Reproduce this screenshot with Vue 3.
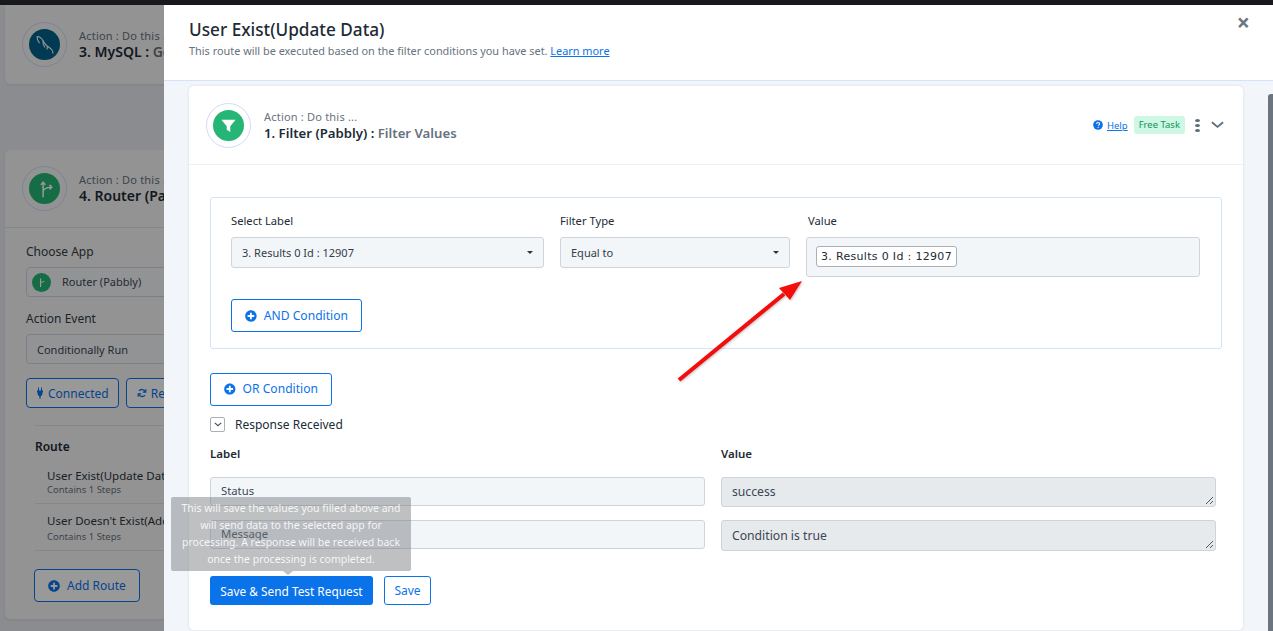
<script setup>
const routes = [
  { name: "User Exist(Update Data)", steps: "Contains 1 Steps" },
  { name: "User Doesn't Exist(Add Data)", steps: "Contains 1 Steps" },
];

const responses = [
  { label: "Status", value: "success", cls: "short" },
  { label: "Message", value: "Condition is true", cls: "tall" },
];

const plus =
  "M256 8C119 8 8 119 8 256s111 248 248 248 248-111 248-248S393 8 256 8zm144 276c0 6.6-5.4 12-12 12h-92v92c0 6.6-5.4 12-12 12h-56c-6.6 0-12-5.4-12-12v-92h-92c-6.6 0-12-5.4-12-12v-56c0-6.6 5.4-12 12-12h92v-92c0-6.6 5.4-12 12-12h56c6.6 0 12 5.4 12 12v92h92c6.6 0 12 5.4 12 12v56z";
</script>

<template>
  <div class="page">
    <div class="topbar"></div>

    <div class="stage">
      <!-- builder behind the drawer -->
      <div class="builder">
        <section class="step first">
          <div class="step-head">
            <span class="ring">
              <span class="disc mysql">
                <svg viewBox="0 0 24 24" width="24" height="24" fill="none" stroke="#fff" stroke-width="1.100">
                  <path d="M4 3.500c2.500 0 4.500 1.500 6 4 1 2 2 3.500 3.500 5 1.500 1.200 4 2.500 6 5" />
                  <path d="M4 3.500c0 3 1 5 2.500 6.500M10 7.500c-.5 3 .5 5 2 7M14.500 13l-.5 3.500M19.500 17.500l.5 3" />
                </svg>
              </span>
            </span>
            <div class="step-text">
              <div class="kicker">Action : Do this ...</div>
              <div class="step-title">3. MySQL : <span>Get Data</span></div>
            </div>
          </div>
        </section>

        <section class="step second">
          <div class="step-head bordered">
            <span class="ring">
              <span class="disc green">
                <svg viewBox="0 0 24 24" width="18" height="18" fill="none" stroke="#fff" stroke-width="2">
                  <path d="M9.500 23V4M9.500 16c0-4 4-6 11-6.500" />
                  <path d="M6.500 6.500l3-3.500 3 3.500M18 6.500l3 3-3 3" />
                </svg>
              </span>
            </span>
            <div class="step-text">
              <div class="kicker">Action : Do this ...</div>
              <div class="step-title">4. Router (Pabbly) : <span>Conditionally Run</span></div>
            </div>
          </div>

          <div class="step-body">
            <div class="bg-label">Choose App</div>
            <div class="bg-select app">
              <span class="mini">
                <svg viewBox="0 0 24 24" width="11" height="11" fill="none" stroke="#fff" stroke-width="2.500">
                  <path d="M10 22V3M10 12c2 0 5-1 8-3" />
                </svg>
              </span>
              Router (Pabbly)
            </div>
            <div class="bg-label">Action Event</div>
            <div class="bg-select">Conditionally Run</div>
            <div class="bg-actions">
              <span class="bg-btn connected">
                <svg viewBox="0 0 24 24" width="8" height="12" fill="currentColor" preserveAspectRatio="none">
                  <path d="M6 1h3v6h6V1h3v6h3v3h-1c0 5-3 8-6 8.500V23h-4v-4.500C7 18 4 15 4 10H3V7h3z" />
                </svg>
                Connected
              </span>
              <span class="bg-btn">
                <svg viewBox="0 0 24 24" width="10" height="10" fill="none" stroke="currentColor" stroke-width="3">
                  <path d="M20 10A8.500 8.500 0 0 0 5 7M4 14a8.500 8.500 0 0 0 15 3" />
                  <path d="M21 3v7h-7M3 21v-7h7" />
                </svg>
                Re-authorize
              </span>
            </div>
            <div class="route-block">
              <div class="route-title">Route</div>
              <div v-for="route in routes" :key="route.name" class="route">
                <div class="route-name">{{ route.name }}</div>
                <div class="route-steps">{{ route.steps }}</div>
              </div>
              <span class="bg-btn add">
                <svg viewBox="0 0 512 512" width="12" height="12" fill="currentColor"><path :d="plus" /></svg>
                Add Route
              </span>
            </div>
          </div>
        </section>
      </div>

      <div class="overlay"></div>

      <!-- drawer -->
      <aside class="drawer">
        <header class="drawer-head">
          <div>
            <h1>User Exist(Update Data)</h1>
            <p>This route will be executed based on the filter conditions you have set. <a href="#">Learn more</a></p>
          </div>
          <span class="close">×</span>
        </header>

        <div class="drawer-body">
          <div class="card">
            <div class="card-head">
              <span class="ring">
                <span class="disc filter">
                  <svg viewBox="0 0 24 24" width="17" height="17" fill="#fff">
                    <path d="M2 4h20l-7.500 9v8l-5-3v-5z" />
                  </svg>
                </span>
              </span>
              <div class="step-text">
                <div class="kicker">Action : Do this ...</div>
                <div class="step-title">1. Filter (Pabbly) : <span>Filter Values</span></div>
              </div>
              <div class="card-tools">
                <svg class="help-icon" viewBox="0 0 512 512" width="10" height="10">
                  <circle cx="256" cy="256" r="248" fill="#0b73ea" />
                  <path d="M180 200c5-50 40-75 80-75 45 0 78 28 78 68 0 55-62 55-62 100" fill="none" stroke="#fff" stroke-width="56" />
                  <circle cx="262" cy="375" r="34" fill="#fff" />
                </svg>
                <a href="#" class="help">Help</a>
                <span class="badge">Free Task</span>
                <span class="dots"><i></i><i></i><i></i></span>
                <svg viewBox="0 0 14 8" width="13" height="8" fill="none" stroke="#5f6d7a" stroke-width="2">
                  <path d="M1 1l6 5 6-5" />
                </svg>
              </div>
            </div>

            <div class="card-body">
              <div class="filter-box">
                <div class="filter-row">
                  <div class="field label-field">
                    <label>Select Label</label>
                    <div class="select">3. Results 0 Id : 12907<b class="caret"></b></div>
                  </div>
                  <div class="field type-field">
                    <label>Filter Type</label>
                    <div class="select">Equal to<b class="caret"></b></div>
                  </div>
                  <div class="field value-field">
                    <label>Value</label>
                    <div class="value-box"><span class="chip">3. Results 0 Id : 12907</span></div>
                  </div>
                </div>
                <button class="btn-outline and">
                  <svg viewBox="0 0 512 512" width="12" height="12" fill="currentColor"><path :d="plus" /></svg>
                  AND Condition
                </button>
              </div>

              <button class="btn-outline or">
                <svg viewBox="0 0 512 512" width="12" height="12" fill="currentColor"><path :d="plus" /></svg>
                OR Condition
              </button>

              <div class="toggle-row">
                <span class="toggle">
                  <svg viewBox="0 0 10 6" width="8" height="5" fill="none" stroke="#44525f" stroke-width="1.500"><path d="M1 1l4 3.500L9 1" /></svg>
                </span>
                Response Received
              </div>

              <div class="resp-grid heads">
                <strong>Label</strong>
                <strong>Value</strong>
              </div>
              <div v-for="row in responses" :key="row.label" class="resp-grid row">
                <div class="resp-label">{{ row.label }}</div>
                <div class="resp-value" :class="row.cls">
                  {{ row.value }}
                  <svg class="grip" viewBox="0 0 9 9" width="9" height="9" stroke="#555" stroke-width="1">
                    <path d="M1 8l7-7M5 8l3-3" />
                  </svg>
                </div>
              </div>

              <div class="submit-row">
                <button class="btn-primary">Save &amp; Send Test Request</button>
                <button class="btn-outline save">Save</button>
              </div>
            </div>
          </div>
        </div>

        <div class="scroll-thumb"></div>

        <!-- annotation arrow -->
        <svg class="arrow" width="140" height="110" viewBox="0 0 140 110">
          <path d="M8 105L113 19" stroke="#f30d0d" stroke-width="4" fill="none" />
          <path d="M131 6L108 13 119 25z" fill="#f30d0d" />
        </svg>

        <div class="tooltip">
          This will save the values you filled above and will send data to the selected app for processing. A response will be received back once the processing is completed.
        </div>
      </aside>
    </div>
  </div>
</template>

<style>
html,
body {
  margin: 0;
  overflow: hidden;
}
</style>

<style scoped>
.page {
  width: 1273px;
  height: 631px;
  overflow: hidden;
  display: flex;
  flex-direction: column;
  font-family: "Noto Sans", "Open Sans", sans-serif;
  color: #212b36;
}
.topbar {
  height: 5px;
  flex: none;
  background: #18181f;
}
.stage {
  position: relative;
  flex: 1;
  overflow: hidden;
  background: #e8eaee;
}

.builder {
  width: 420px;
  padding-left: 5px;
  box-sizing: border-box;
}
.step {
  width: 415px;
  background: #f5f5f5;
  border-radius: 0 0 5px 5px;
  box-shadow: 0 1px 3px rgba(0, 0, 0, 0.08);
}
.first {
  height: 79px;
  margin-bottom: 66px;
}
.second {
  height: 469px;
  border-radius: 5px;
}
.step-head {
  display: flex;
  align-items: center;
  gap: 12px;
  padding: 17px;
  white-space: nowrap;
}
.step-head .ring {
  background: transparent;
}
.step-head .step-title {
  font-size: 14px;
}
.step-head .kicker {
  margin-bottom: 4px;
}
.step-head .step-text {
  margin-top: 0;
}
.step-head.bordered {
  height: 78px;
  box-sizing: border-box;
  border-bottom: 1px solid #dbe3f0;
}
.ring {
  flex: none;
  width: 43px;
  height: 43px;
  border: 1px solid #cfdcf8;
  border-radius: 50%;
  background: #fff;
  display: flex;
  align-items: center;
  justify-content: center;
}
.disc {
  width: 31px;
  height: 31px;
  border-radius: 50%;
  display: flex;
  align-items: center;
  justify-content: center;
}
.mysql {
  background: #00618a;
}
.green {
  background: #25b574;
}
.filter {
  background: #25b574;
}
.step-text {
  line-height: 1;
  margin-top: 2px;
}
.kicker {
  font-size: 11px;
  letter-spacing: 0.2px;
  color: #67727e;
  margin-bottom: 5px;
}
.step-title {
  font-size: 13.200px;
  font-weight: 600;
  color: #212b36;
}
.step-title span {
  color: #67727e;
}
.step-body {
  padding: 16px 0 0 21px;
}
.bg-label {
  font-size: 12px;
  color: #333c46;
  margin-bottom: 7px;
  line-height: 16px;
}
.bg-select {
  width: 380px;
  height: 30px;
  box-sizing: border-box;
  border: 1px solid #cfd4da;
  border-radius: 4px;
  background: #f3f6f9;
  padding: 0 10px;
  font-size: 11px;
  line-height: 30px;
  margin-bottom: 14px;
  color: #3c4652;
}
.bg-select.app {
  display: flex;
  align-items: center;
  gap: 11px;
  padding: 0 5px;
}
.mini {
  width: 19px;
  height: 19px;
  border-radius: 50%;
  background: #25b574;
  display: flex;
  align-items: center;
  justify-content: center;
}
.bg-actions {
  display: flex;
  gap: 7px;
  margin-top: 1px;
}
.bg-btn {
  box-sizing: border-box;
  height: 30px;
  display: inline-flex;
  align-items: center;
  gap: 4px;
  padding: 0 10px;
  border: 1px solid #0b73ea;
  border-radius: 4px;
  background: #fff;
  color: #0b73ea;
  font-size: 12px;
  white-space: nowrap;
}
.connected {
  padding: 0 9px;
}
.route-block {
  margin: 17px 0 0 9px;
  padding-top: 13px;
  border-top: 1px solid #dbe3f0;
  width: 360px;
}
.route-title {
  font-size: 12px;
  font-weight: 600;
  color: #212b36;
  line-height: 16px;
}
.route {
  padding: 15px 0 9px 12px;
  border-bottom: 1px solid #dbe3f0;
  line-height: 1;
}
.route + .route {
  padding-top: 11px;
}
.route-name {
  font-size: 11.500px;
  color: #2b3540;
  margin-bottom: 3px;
}
.route + .route .route-name {
  margin-bottom: 5px;
}
.route-steps {
  font-size: 9.500px;
  color: #67727e;
}
.bg-btn.add {
  height: 33px;
  margin: 18px 0 0 -1px;
  padding: 0 13px;
  gap: 7px;
}

.overlay {
  position: absolute;
  inset: 0;
  background: rgba(0, 0, 0, 0.4);
}

.drawer {
  position: absolute;
  left: 164px;
  top: 0;
  right: 0;
  bottom: 0;
  background: #f2f6fa;
  display: flex;
  flex-direction: column;
}
.drawer-head {
  flex: none;
  height: 76px;
  box-sizing: border-box;
  background: #fff;
  border-bottom: 1px solid #d4e2fb;
  padding: 14px 25px 0;
  display: flex;
  justify-content: space-between;
  align-items: flex-start;
}
h1 {
  margin: 0;
  font-size: 17.200px;
  line-height: 22px;
  font-weight: 500;
  color: #212b36;
}
.drawer-head p {
  margin: 2px 0 0;
  font-size: 10.900px;
  line-height: 16px;
  color: #67727e;
}
a {
  color: #0b73ea;
}
.close {
  font-size: 23px;
  line-height: 18px;
  font-weight: 700;
  color: #6c7680;
  margin: -6px -2px 0 0;
}
.drawer-body {
  flex: 1;
  min-height: 0;
  padding: 5px 30px 0 25px;
}
.card {
  height: 544px;
  background: #fff;
  border-radius: 5px;
  box-shadow: 0 0 3px rgba(40, 60, 90, 0.12);
}
.card-head {
  height: 79px;
  box-sizing: border-box;
  border-bottom: 1px solid #edf2fa;
  display: flex;
  align-items: center;
  gap: 13px;
  padding: 0 17px;
}
.card-tools {
  margin-left: auto;
  display: flex;
  align-items: center;
  font-size: 9.500px;
  padding-right: 2px;
}
.help {
  margin: 0 6px 0 4px;
}
.badge {
  background: #cef7e4;
  color: #13945c;
  border-radius: 3px;
  padding: 0 5px;
  line-height: 18px;
}
.dots {
  display: flex;
  flex-direction: column;
  gap: 2px;
  margin: 0 11px 0 10px;
}
.dots i {
  width: 5px;
  height: 3px;
  border-radius: 50%;
  background: #5f6d7a;
}

.card-body {
  padding: 32px 21px 0;
}
.filter-box {
  height: 152px;
  box-sizing: border-box;
  border: 1px solid #d4e2fb;
  border-radius: 3px;
  padding: 15px 20px 0;
}
.filter-row {
  display: flex;
  align-items: flex-start;
}
.field label {
  display: block;
  font-size: 11.200px;
  line-height: 16px;
  margin-bottom: 8px;
  color: #212b36;
}
.label-field {
  width: 313px;
  margin-right: 16px;
}
.type-field {
  width: 230px;
  margin-right: 16px;
}
.value-field {
  width: 394px;
}
.value-field label {
  padding-left: 2px;
}
.select {
  position: relative;
  height: 31px;
  box-sizing: border-box;
  border: 1px solid #cfd4da;
  border-radius: 3px;
  background: #f3f6f9;
  padding: 0 10px;
  font-size: 11px;
  line-height: 30px;
  color: #333c46;
}
.caret {
  position: absolute;
  right: 10px;
  top: 13px;
  border: 3px solid transparent;
  border-top: 3px solid #333;
  border-bottom: 0;
}
.value-box {
  height: 40px;
  box-sizing: border-box;
  border: 1px solid #cfd4da;
  border-radius: 3px;
  background: #f3f6f9;
  padding: 8px 9px;
  display: flex;
  align-items: flex-start;
}
.chip {
  height: 21px;
  box-sizing: border-box;
  border: 1px solid #aab0b6;
  border-radius: 3px;
  background: #fff;
  padding: 0 4px;
  font-family: "DejaVu Sans", sans-serif;
  font-size: 11px;
  letter-spacing: 0.32px;
  line-height: 19px;
  color: #212b36;
  white-space: nowrap;
}
.btn-outline {
  box-sizing: border-box;
  display: inline-flex;
  align-items: center;
  gap: 7px;
  border: 1px solid #0b73ea;
  border-radius: 3px;
  background: #fff;
  color: #0b73ea;
  font-family: inherit;
  font-size: 12.100px;
  white-space: nowrap;
}
.and {
  width: 131px;
  height: 33px;
  margin-top: 22px;
  padding: 0 13px;
}
.or {
  width: 122px;
  height: 33px;
  margin-top: 24px;
  padding: 0 13px 2px;
  display: flex;
}
.toggle-row {
  display: flex;
  align-items: center;
  gap: 10px;
  margin-top: 11px;
  height: 14px;
  font-size: 12px;
  color: #212b36;
}
.toggle {
  width: 13px;
  height: 13px;
  border: 1px solid #aab0b6;
  border-radius: 2px;
  display: flex;
  align-items: center;
  justify-content: center;
}
.resp-grid {
  display: grid;
  grid-template-columns: 495px 495px;
  column-gap: 16px;
}
.heads {
  margin-top: 15px;
  font-size: 11.500px;
  line-height: 16px;
  margin-bottom: 15px;
}
.heads strong {
  font-weight: 600;
}
.row {
  align-items: start;
  margin-bottom: 13px;
}
.resp-label,
.resp-value {
  position: relative;
  box-sizing: border-box;
  border: 1px solid #cfd4da;
  border-radius: 3px;
  padding: 0 10px;
  line-height: 26px;
  height: 29px;
  color: #3c4652;
}
.resp-label {
  background: #f3f6f9;
  font-size: 11.300px;
}
.resp-value {
  background: #e7eaed;
  font-size: 12.200px;
  line-height: 28px;
  height: 30px;
}
.resp-value.tall {
  height: 31px;
  line-height: 29px;
}
.grip {
  position: absolute;
  right: 1px;
  bottom: 1px;
}
.submit-row {
  display: flex;
  gap: 11px;
  margin-top: 25px;
}
.btn-primary {
  width: 163px;
  height: 29px;
  border: 0;
  border-radius: 3px;
  background: #0b73ea;
  color: #fff;
  font-family: inherit;
  font-size: 11.850px;
}
.save {
  width: 47px;
  height: 29px;
  justify-content: center;
  font-size: 12px;
}

.scroll-thumb {
  position: absolute;
  right: 0;
  top: 89px;
  bottom: 0;
  width: 5px;
  border-radius: 3px 0 0 0;
  background: #6c757d;
}
.arrow {
  position: absolute;
  left: 507px;
  top: 270px;
  filter: drop-shadow(1px 1px 1px rgba(0, 0, 0, 0.22));
}
.tooltip {
  position: absolute;
  left: 7px;
  top: 492px;
  width: 240px;
  height: 74px;
  box-sizing: border-box;
  padding: 3px 8px;
  background: rgba(120, 124, 128, 0.48);
  border-radius: 2px;
  color: rgba(255, 255, 255, 0.88);
  font-size: 10.500px;
  line-height: 17px;
  text-align: center;
}
.tooltip::after {
  content: "";
  position: absolute;
  left: 112px;
  bottom: -4px;
  border: 5px solid transparent;
  border-top: 4px solid rgba(120, 124, 128, 0.48);
  border-bottom: 0;
}
</style>
